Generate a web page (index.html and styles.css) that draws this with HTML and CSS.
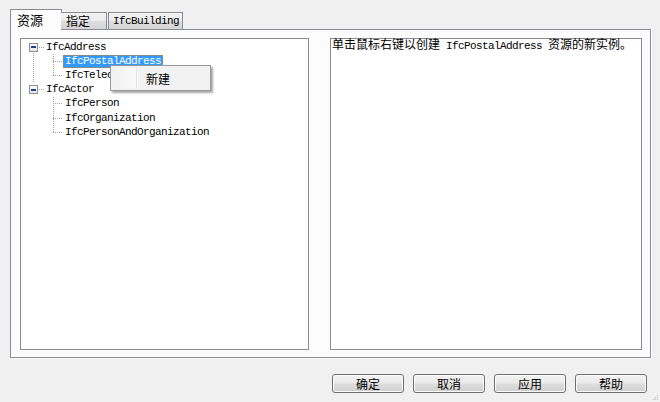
FILE: index.html
```html
<!DOCTYPE html>
<html>
<head>
<meta charset="utf-8">
<link rel="stylesheet" href="styles.css">
</head>
<body>
<div class="dialog">
  <div class="tabs">
    <div class="tab active">资源</div>
    <div class="tab t2">指定</div>
    <div class="tab t3 mono">IfcBuilding</div>
  </div>
  <div class="panel">
    <div class="treebox">
      <ul class="tree">
        <li class="root">
          <div class="row"><span class="exp"></span><span class="hl rooth"></span><span class="label mono">IfcAddress</span></div>
          <ul class="children">
            <li><div class="row"><span class="hl childh"></span><span class="label mono sel">IfcPostalAddress</span></div></li>
            <li class="last"><div class="row"><span class="hl childh"></span><span class="label mono">IfcTelecomAddress</span></div></li>
          </ul>
        </li>
        <li class="root last">
          <div class="row"><span class="exp"></span><span class="hl rooth"></span><span class="label mono">IfcActor</span></div>
          <ul class="children">
            <li><div class="row"><span class="hl childh"></span><span class="label mono">IfcPerson</span></div></li>
            <li><div class="row"><span class="hl childh"></span><span class="label mono">IfcOrganization</span></div></li>
            <li class="last"><div class="row"><span class="hl childh"></span><span class="label mono">IfcPersonAndOrganization</span></div></li>
          </ul>
        </li>
      </ul>
      <div class="menu">
        <div class="menu-item"><span class="gutter"></span><span class="mtext">新建</span></div>
      </div>
    </div>
    <div class="descbox">
      <p class="desc">单击鼠标右键以创建<span class="mono"> IfcPostalAddress </span>资源的新实例。</p>
    </div>
  </div>
  <div class="footer">
    <button class="btn">确定</button>
    <button class="btn">取消</button>
    <button class="btn">应用</button>
    <button class="btn">帮助</button>
  </div>
  <div class="grip">
    <svg width="8" height="8" viewBox="0 0 8 8"><rect x="6" y="2" width="1" height="1" fill="#b8b8b8"/><rect x="4" y="4" width="1" height="1" fill="#b8b8b8"/><rect x="6" y="4" width="1" height="1" fill="#b8b8b8"/><rect x="2" y="6" width="1" height="1" fill="#b8b8b8"/><rect x="4" y="6" width="1" height="1" fill="#b8b8b8"/><rect x="6" y="6" width="1" height="1" fill="#b8b8b8"/></svg>
  </div>
</div>
</body>
</html>
```
FILE: styles.css
```css
* { box-sizing: border-box; }
html, body { margin: 0; padding: 0; }
body {
  width: 660px;
  height: 402px;
  background: #f0f0f0;
  font-family: "Noto Sans CJK SC", "Liberation Sans", sans-serif;
  font-size: 12px;
  color: #000;
  overflow: hidden;
}
.dialog {
  padding: 9px 0 0 10px;
  position: relative;
  height: 402px;
}
.mono {
  font-family: "Liberation Mono", "DejaVu Sans Mono", monospace;
  font-size: 11px;
  letter-spacing: -0.6px;
}
.tabs {
  display: flex;
  align-items: flex-end;
  height: 20px;
  position: relative;
  z-index: 1;
}
.tab {
  height: 17px;
  border: 1px solid #898c95;
  border-bottom: none;
  background: linear-gradient(#f3f3f3, #ebebeb 50%, #dedede 50%, #d4d4d4);
  line-height: 16px;
  padding-left: 4px;
  font-size: 12px;
}
.tab.active {
  width: 52px;
  height: 21px;
  margin-bottom: -1px;
  background: #fcfcfc;
  padding-left: 6px;
  line-height: 20px;
  font-size: 13px;
}
.tab.t2 { width: 46px; margin-left: -1px; border-left: none; padding-left: 5px; }
.tab.t3 { width: 75px; margin-left: 1px; padding-left: 4px; font-size: 11px; }
.panel {
  width: 641px;
  height: 329px;
  border: 1px solid #898c95;
  background: #fcfcfc;
  box-shadow: 1px 1px 0 #ffffff;
  display: flex;
  gap: 21px;
  padding: 8px 8px 7px 9px;
}
.treebox, .descbox {
  height: 312px;
  border: 1px solid #8b8b8b;
  background: #ffffff;
}
.treebox {
  width: 289px;
  position: relative;
  padding-top: 1px;
}
.descbox {
  width: 312px;
}
.tree, .children {
  list-style: none;
  margin: 0;
  padding: 0;
}
.row {
  display: flex;
  align-items: center;
  height: 14.2px;
}
.root {
  background-image: repeating-linear-gradient(to bottom, #a0a0a0 0 1px, transparent 1px 2px);
  background-repeat: no-repeat;
  background-position: 12px 7px;
  background-size: 1px 100%;
}
.root.last { background-image: none; }
.children > li {
  background-image: repeating-linear-gradient(to bottom, #a0a0a0 0 1px, transparent 1px 2px);
  background-repeat: no-repeat;
  background-position: 32px 0;
  background-size: 1px 100%;
}
.children > li.last { background-size: 1px 7px; }
.exp {
  width: 9px;
  height: 9px;
  margin-left: 8px;
  border: 1px solid #8e8f8f;
  background: linear-gradient(#ffffff, #e6e6e6) ;
  flex: none;
  display: flex;
  align-items: center;
  justify-content: center;
}
.exp::after {
  content: "";
  width: 5px;
  height: 2px;
  background: #1c3f94;
}
.hl {
  height: 1px;
  flex: none;
  background-image: repeating-linear-gradient(to right, #a0a0a0 0 1px, transparent 1px 2px);
}
.rooth { width: 5px; margin-left: 1px; }
.childh { width: 10px; margin-left: 32px; }
.label {
  padding: 0 2px;
  height: 13px;
  line-height: 13px;
  white-space: nowrap;
}
.label.sel {
  background: #3399ff;
  color: #fff;
  outline: 1px dotted #c7801a;
  outline-offset: -1px;
}
.menu {
  position: absolute;
  left: 89px;
  top: 26px;
  width: 101px;
  height: 26px;
  background: #f2f2f2;
  border: 1px solid #979797;
  box-shadow: 2px 2px 2px rgba(0,0,0,0.35);
  padding: 2px;
}
.menu-item {
  display: flex;
  height: 20px;
  align-items: center;
}
.gutter {
  width: 24px;
  height: 20px;
  background: linear-gradient(to right, #f1f1f1, #fafafa);
  border-right: 1px solid #e2e3e3;
  box-shadow: 1px 0 0 #ffffff;
}
.mtext {
  margin-left: 9px;
  font-size: 12px;
}
.desc {
  margin: 0;
  padding: 0 0 0 1px;
  line-height: 12px;
  margin-top: -1px;
  white-space: nowrap;
  font-size: 12px;
}
.desc .mono { font-size: 11px; }
.footer {
  display: flex;
  justify-content: flex-end;
  gap: 9px;
  padding-right: 13px;
  margin-top: 16px;
  width: 650px;
}
.btn {
  width: 72px;
  height: 19px;
  border: 1px solid #707070;
  border-radius: 3px;
  background: linear-gradient(#f2f2f2, #ebebeb 45%, #dddddd 55%, #cfcfcf);
  box-shadow: inset 0 0 0 1px #fcfcfc;
  font-family: "Noto Sans CJK SC", sans-serif;
  font-size: 12px;
  line-height: 15px;
  padding: 0;
  color: #000;
}
.grip {
  position: absolute;
  right: 1px;
  bottom: 1px;
  width: 8px;
  height: 8px;
  line-height: 0;
}
```
